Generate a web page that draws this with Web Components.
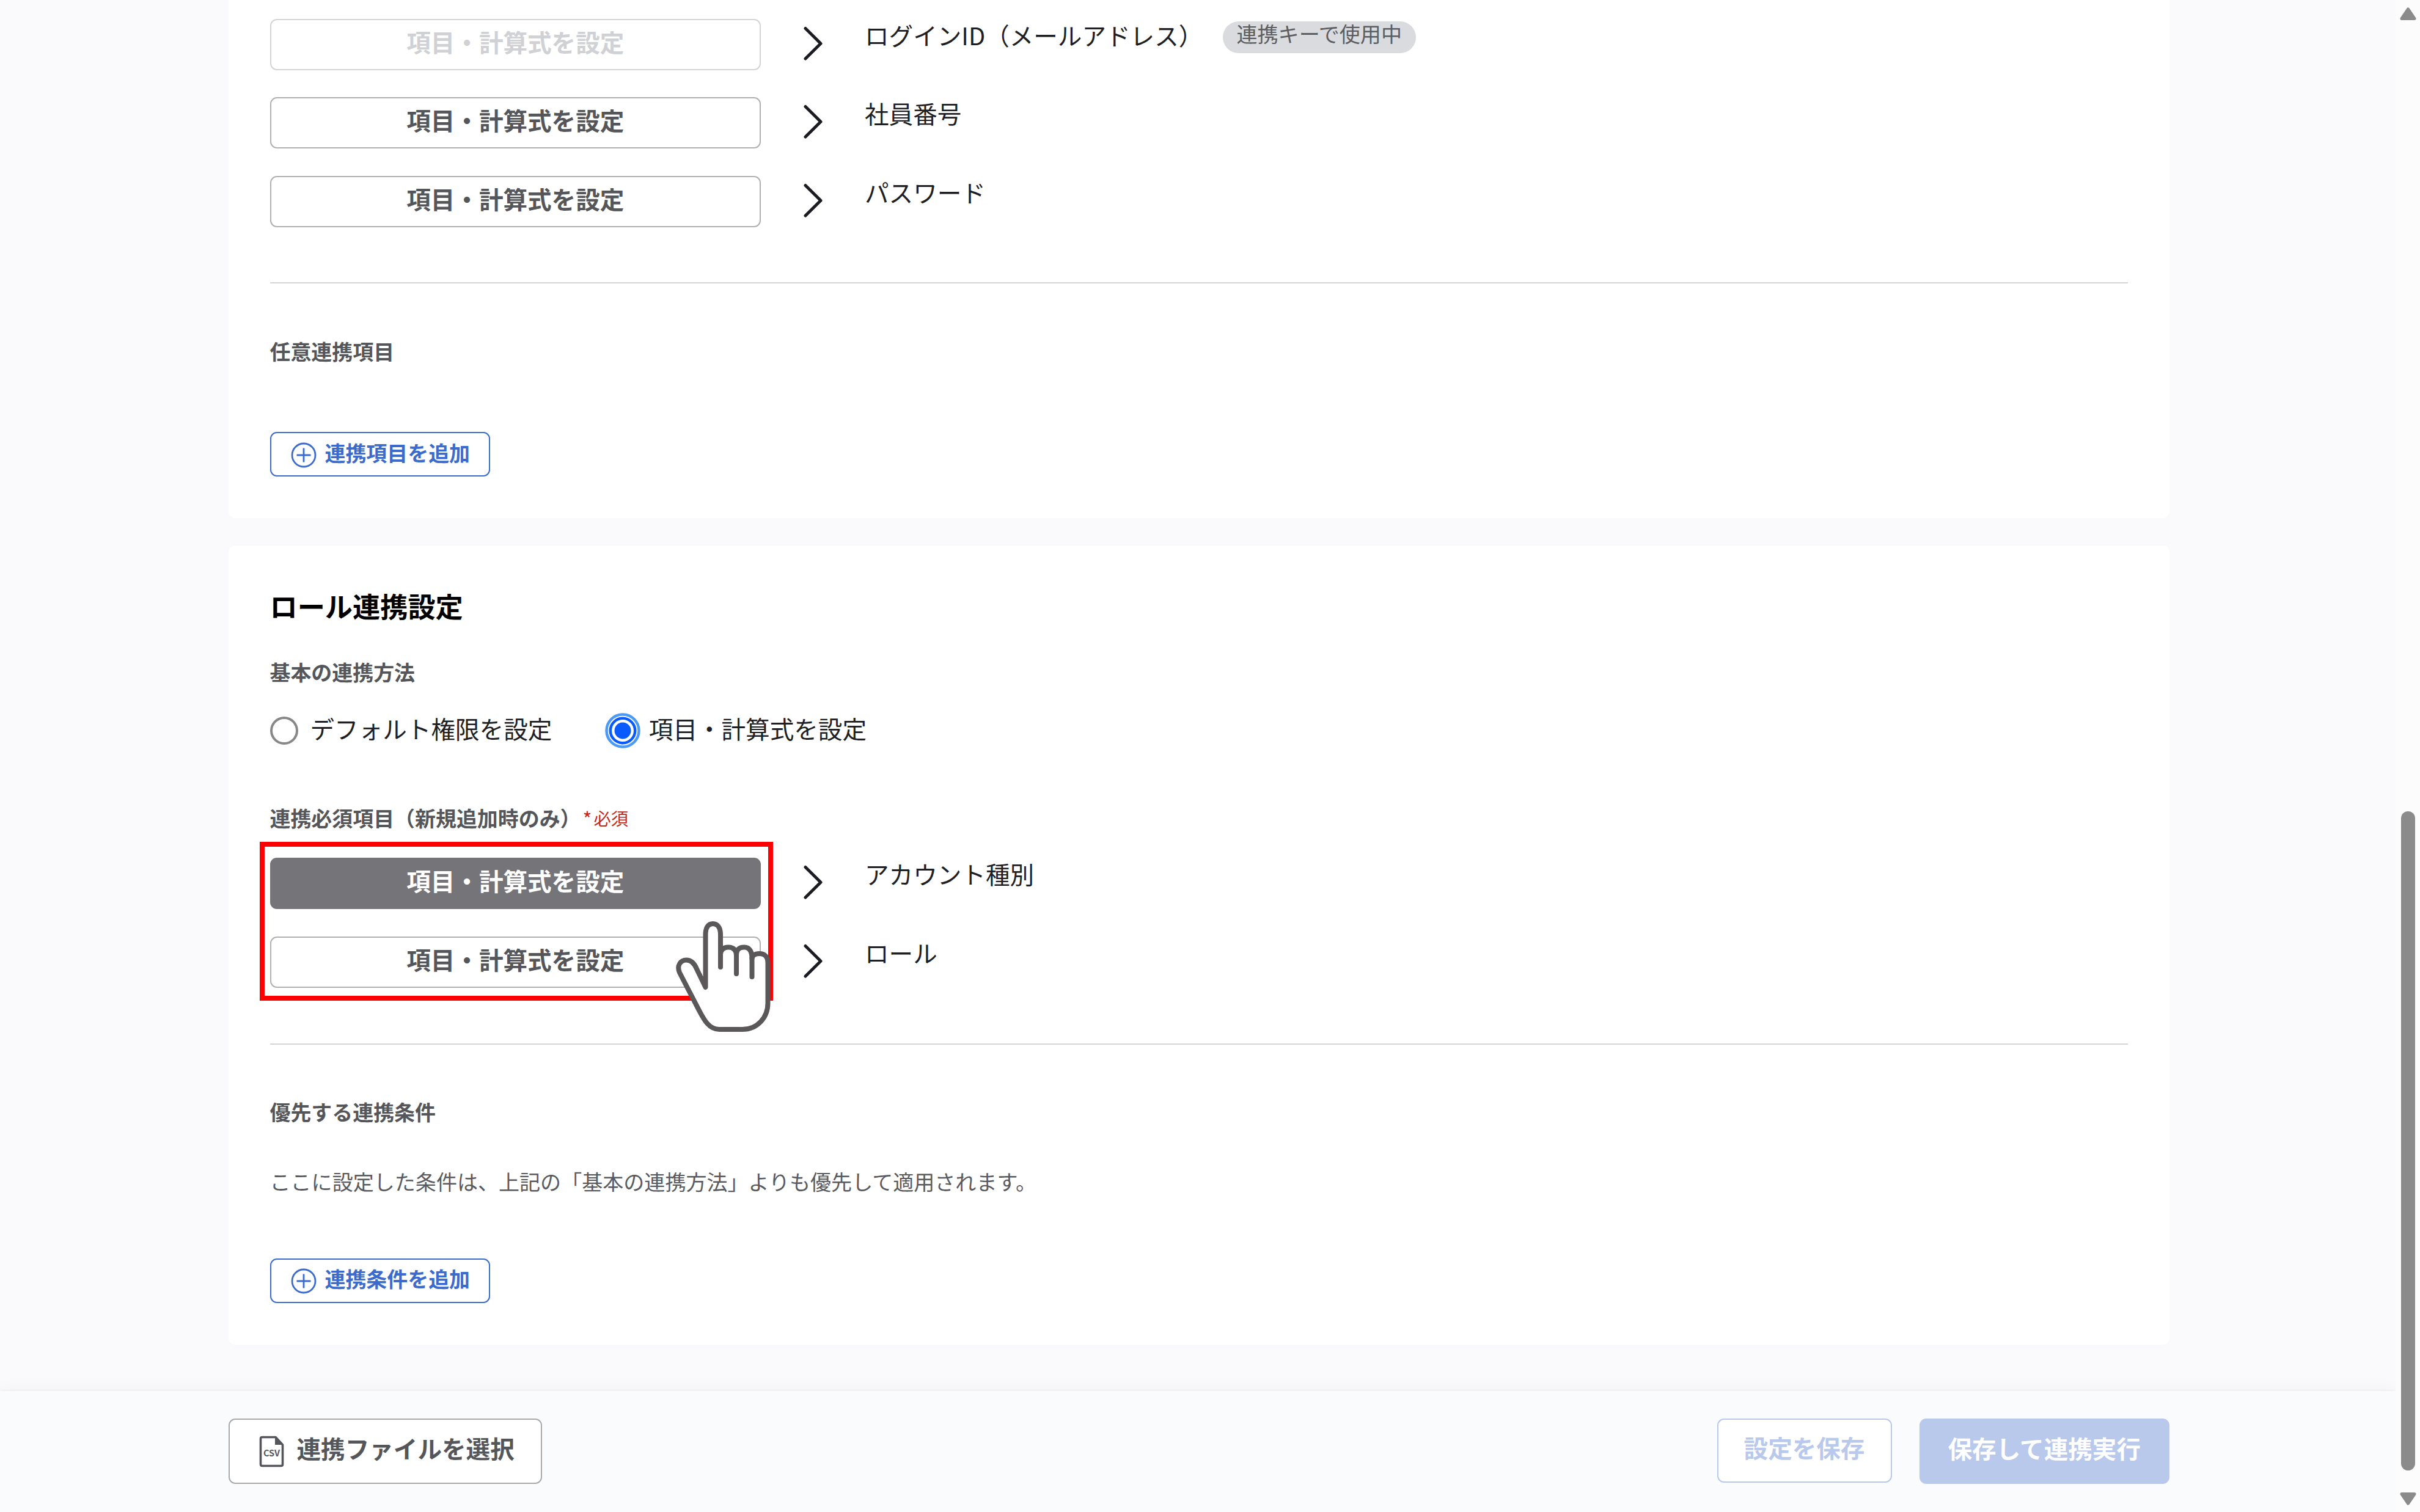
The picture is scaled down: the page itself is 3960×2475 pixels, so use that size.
<!DOCTYPE html>
<html lang="ja">
<head>
<meta charset="utf-8">
<title>ロール連携設定</title>
<style>
  html, body { margin: 0; height: 100%; overflow: hidden; }
  body {
    background: #fafafc;
    color: #1e1f24;
    font-family: "Noto Sans CJK JP", "Noto Sans", sans-serif;
    font-size: 39.6px;
    line-height: 1;
  }
</style>
</head>
<body>
<app-shell>
  <settings-card class="first">
    <mapping-list>
      <mapping-row state="disabled">ログインID（メールアドレス）<status-badge slot="badge">連携キーで使用中</status-badge></mapping-row>
      <mapping-row>社員番号</mapping-row>
      <mapping-row>パスワード</mapping-row>
    </mapping-list>
    <card-divider style="margin-top: 90px"></card-divider>
    <sub-heading style="margin-top: 85.3px">任意連携項目</sub-heading>
    <add-button style="margin-top: 107.9px">連携項目を追加</add-button>
  </settings-card>

  <settings-card>
    <card-title>ロール連携設定</card-title>
    <sub-heading style="margin-top: 53.1px">基本の連携方法</sub-heading>
    <radio-group style="margin-top: 42.4px">
      <radio-item>デフォルト権限を設定</radio-item>
      <radio-item checked>項目・計算式を設定</radio-item>
    </radio-group>
    <sub-heading style="margin-top: 88.8px" required>連携必須項目（新規追加時のみ）</sub-heading>
    <mapping-list style="margin-top: 40.2px" highlight>
      <mapping-row state="active">アカウント種別</mapping-row>
      <mapping-row>ロール</mapping-row>
    </mapping-list>
    <card-divider style="margin-top: 90.8px"></card-divider>
    <sub-heading style="margin-top: 84.5px">優先する連携条件</sub-heading>
    <card-note style="margin-top: 64px">ここに設定した条件は、上記の「基本の連携方法」よりも優先して適用されます。</card-note>
    <add-button style="margin-top: 101.4px">連携条件を追加</add-button>
  </settings-card>

  <footer-bar slot="footer">
    <footer-button icon>連携ファイルを選択</footer-button>
    <footer-button slot="end" kind="outline">設定を保存</footer-button>
    <footer-button slot="end" kind="primary">保存して連携実行</footer-button>
  </footer-bar>
  <scroll-bar slot="scroll"></scroll-bar>
</app-shell>

<script>
// small helper: registers an element whose shadow root comes from render(el)
function define(name, render) {
  customElements.define(name, class extends HTMLElement {
    constructor() {
      super();
      this.attachShadow({ mode: "open" });
    }
    connectedCallback() {
      this.shadowRoot.innerHTML = render(this);
    }
  });
}

define("app-shell", () => `
  <style>
    :host { display: grid; grid-template-columns: 1fr 40px; width: 3960px; height: 2475px; overflow: hidden; }
    .page { display: flex; flex-direction: column; min-width: 0; overflow: hidden; }
    .cards {
      flex: 1; display: flex; flex-direction: column; gap: 45px;
      padding: 0 370.5px 0 373.5px;
    }
  </style>
  <div class="page">
    <div class="cards"><slot></slot></div>
    <slot name="footer"></slot>
  </div>
  <slot name="scroll"></slot>
`);

define("settings-card", () => `
  <style>
    :host {
      display: flex; flex-direction: column; align-items: stretch;
      background: #fff; border-radius: 11px; padding: 69px 68px 68px;
    }
    :host(.first) { padding-top: 30.5px; border-radius: 0 0 11px 11px; }
  </style>
  <slot></slot>
`);

define("card-title", () => `
  <style>
    :host { display: block; font-size: 45.2px; font-weight: 700; line-height: 60px; color: #000; }
  </style>
  <slot></slot>
`);

define("sub-heading", el => `
  <style>
    :host { display: flex; font-size: 33.95px; font-weight: 700; line-height: 50px; color: #55565a; }
    .req { display: flex; gap: 3px; font-size: 28.3px; font-weight: 400; color: #c4281c; margin-left: 3px; }
    .mark { font-size: 32px; }
  </style>
  <slot></slot>
  ${el.hasAttribute("required") ? `<span class="req"><span class="mark">*</span><span>必須</span></span>` : ""}
`);

define("card-note", () => `
  <style>
    :host { display: block; font-size: 34.05px; line-height: 50px; color: #5a5b5f; }
  </style>
  <slot></slot>
`);

define("card-divider", () => `
  <style>
    :host { display: block; height: 2.8px; background: #d5d5d6; }
  </style>
`);

define("status-badge", () => `
  <style>
    :host {
      display: block; box-sizing: border-box; height: 52px; padding: 0 22.6px 14px;
      border-radius: 26px; background: #dadbdf; color: #5c5d61;
      font-size: 34.1px; line-height: 38px; white-space: nowrap;
    }
  </style>
  <slot></slot>
`);

define("mapping-list", el => `
  <style>
    :host { display: flex; flex-direction: column; gap: 44.5px; position: relative; }
    .frame {
      position: absolute; left: -16.6px; top: -26px; width: 840px; height: 260px;
      box-sizing: border-box; border: 8px solid #f00;
    }
    .hand { position: absolute; left: 664.4px; top: 104px; }
  </style>
  <slot></slot>
  ${el.hasAttribute("highlight") ? `
    <div class="frame"></div>
    <svg class="hand" width="155" height="182" viewBox="0 0 155 182" fill="#fff" stroke="#5a5859" stroke-width="8" stroke-linecap="round" stroke-linejoin="round">
      <path d="M48.5 108V22C48.5 10 53 4 60.5 4S73 10 73 22V54C73.500 46 78 42.500 86 42.500S99 47 99 56C99 47 103 42.500 112 42.500S124.500 50 124.500 61C125 56 129 53 137 53S150.500 58 150.500 68V134C150.500 158 133 177 109 177H71C54 177 46 161 38 146L6 84C1 72 8 63.500 17 63.500C25 63.500 30 68 34 78Z"/>
      <path d="M73 50V75M99 54V86M124.500 60V91"/>
    </svg>` : ""}
`);

define("mapping-row", el => `
  <style>
    :host { display: flex; align-items: flex-start; height: 84px; }
    button {
      box-sizing: border-box; width: 803.5px; height: 84px; margin: 0; padding: 0 0 10px;
      border: 2.8px solid #b0b0b3; border-radius: 11px; background: #fff; color: #55565a;
      font: 700 39.6px/1 "Noto Sans CJK JP", sans-serif;
    }
    button.disabled { border-color: #d3d4d6; color: #d0d1d4; }
    button.active { border-color: #757479; background: #757479; color: #fff; }
    svg { margin: 12px 0 0 69px; flex: none; }
    .label { margin: 1.2px 0 0 67px; line-height: 50px; white-space: nowrap; }
    ::slotted([slot="badge"]) { margin: 4.5px 0 0 32.5px; }
  </style>
  <button class="${el.getAttribute("state") || ""}">項目・計算式を設定</button>
  <svg width="34" height="58" viewBox="0 0 34 58" fill="none" stroke="#1b1c22" stroke-width="5" stroke-linecap="round" stroke-linejoin="round">
    <path d="M4 3.500L29 28.300L4 53"/>
  </svg>
  <span class="label"><slot></slot></span>
  <slot name="badge"></slot>
`);

define("add-button", () => `
  <style>
    :host { display: flex; }
    button {
      display: flex; align-items: center; box-sizing: border-box; height: 72.3px; width: 360.5px;
      margin: 0; padding: 0 0 0 32px; border: 2.8px solid #3b6bcc; border-radius: 11px;
      background: #fff; color: #3b6bcc; font: 700 33.95px/1 "Noto Sans CJK JP", sans-serif;
    }
    svg { margin: 2px 14px 0 0; flex: none; }
    span { padding-bottom: 6px; white-space: nowrap; }
  </style>
  <button>
    <svg width="42" height="42" viewBox="0 0 42 42" fill="none" stroke="#3b6bcc" stroke-width="2.800">
      <circle cx="21" cy="21" r="19"/>
      <path d="M21 9.500V32.500M9.500 21H32.500"/>
    </svg>
    <span><slot></slot></span>
  </button>
`);

define("radio-group", () => `
  <style>
    :host { display: flex; align-items: center; height: 58px; gap: 92.5px; }
  </style>
  <slot></slot>
`);

define("radio-item", el => `
  <style>
    :host { display: flex; align-items: center; white-space: nowrap; }
    svg { flex: none; overflow: visible; margin-right: 20px; }
    span { padding-bottom: 8px; }
  </style>
  <svg width="46" height="46" viewBox="0 0 46 46" fill="#fff">
    ${el.hasAttribute("checked") ? `
      <circle cx="23" cy="23" r="26.500" stroke="#4c9af7" stroke-width="4.500"/>
      <circle cx="23" cy="23" r="20.200" stroke="#0a5bff" stroke-width="4.500"/>
      <circle cx="23" cy="23" r="13.500" fill="#0a5bff"/>` : `
      <circle cx="23" cy="23" r="21" stroke="#88888b" stroke-width="4"/>`}
  </svg>
  <span><slot></slot></span>
`);

define("footer-bar", () => `
  <style>
    :host {
      display: flex; justify-content: space-between; align-items: flex-start; box-sizing: border-box;
      height: 198px; padding: 45px 370.5px 0 373.5px; background: #fafbfd;
      box-shadow: 0 -2px 3px rgba(0,0,0,.035), 0 -4px 28px rgba(0,0,0,.03);
    }
    .end { display: flex; align-items: flex-start; gap: 45.5px; }
  </style>
  <slot></slot>
  <div class="end"><slot name="end"></slot></div>
`);

define("footer-button", el => `
  <style>
    :host { display: block; }
    button {
      display: flex; align-items: center; box-sizing: border-box; height: 107px; width: 513px;
      margin: 0; padding: 0 0 0 48.5px; border: 2.8px solid #a9a9ac; border-radius: 11px;
      background: #fff; color: #55565a; font: 700 39.6px/1 "Noto Sans CJK JP", sans-serif;
    }
    .outline { width: 286px; height: 105px; padding: 0; justify-content: center; border-color: #b9c9ec; color: #b9c9ec; }
    .primary { width: 408.5px; padding: 0; justify-content: center; border-color: #b9c9ec; background: #b9c9ec; color: #fff; }
    span { padding-bottom: 11px; white-space: nowrap; }
    svg { flex: none; margin-right: 19.5px; }
    text { font: 700 14.5px "Noto Sans CJK JP", sans-serif; }
  </style>
  <button class="${el.getAttribute("kind") || ""}">
    ${el.hasAttribute("icon") ? `
      <svg width="42" height="52" viewBox="0 0 42 52">
        <path d="M5 2.500H27L38.500 15V47Q38.500 49.500 36 49.500H5Q2.500 49.500 2.500 47V5Q2.500 2.500 5 2.500Z" fill="#fff" stroke="#55565b" stroke-width="3.600" stroke-linejoin="round"/>
        <path d="M26 2.500V15H38.500Z" fill="#55565b"/>
        <text x="20.500" y="33.500" text-anchor="middle" textLength="27" fill="#55565b">CSV</text>
      </svg>` : ""}
    <span><slot></slot></span>
  </button>
`);

define("scroll-bar", () => `
  <style>
    :host {
      display: flex; flex-direction: column; align-items: center; box-sizing: border-box;
      height: 2475px; padding: 12px 0 11px; background: #fcfcfd;
    }
    .track { flex: 1; display: flex; flex-direction: column; align-items: center; }
    .thumb { width: 23px; height: 1079px; margin-top: 1295px; border-radius: 12px; background: #8b8b8b; }
  </style>
  <svg width="27" height="21" viewBox="0 0 27 21"><path d="M13.500 3L24 18.500H3Z" fill="#8b8b8b" stroke="#8b8b8b" stroke-width="5" stroke-linejoin="round"/></svg>
  <div class="track"><div class="thumb"></div></div>
  <svg width="27" height="21" viewBox="0 0 27 21"><path d="M13.500 18L24 2.500H3Z" fill="#8b8b8b" stroke="#8b8b8b" stroke-width="5" stroke-linejoin="round"/></svg>
`);
</script>
</body>
</html>
